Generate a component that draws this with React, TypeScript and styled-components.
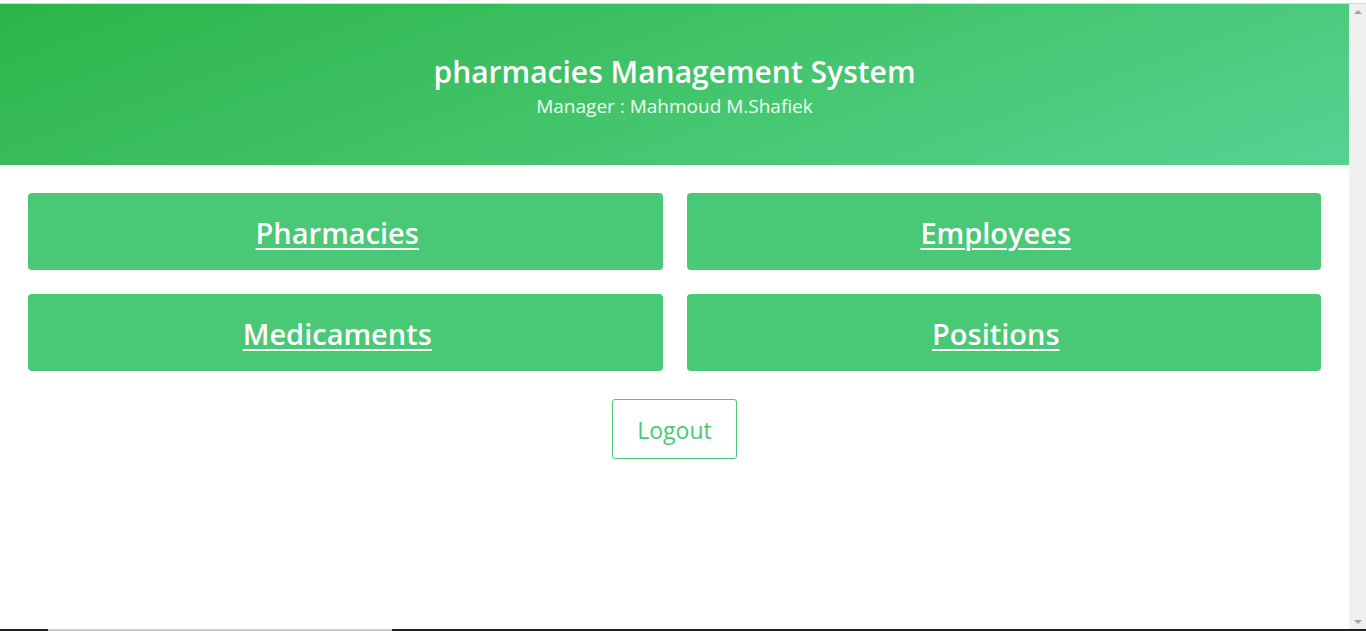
import styled, { createGlobalStyle } from "styled-components";

const GlobalStyle = createGlobalStyle`
  body {
    margin: 0;
    padding-top: 3px;
    background: #fff;
    font-family: "Open Sans", "Noto Sans", sans-serif;
    overflow: hidden;
  }
  * {
    box-sizing: border-box;
  }
`;

const Frame = styled.div`
  height: 628px;
  display: flex;
  flex-direction: column;
  border-top: 1px solid #d6d6d6;
`;

const Viewport = styled.div`
  flex: 1;
  display: flex;
  min-height: 0;
`;

const Page = styled.div`
  flex: 1;
  min-width: 0;
`;

const ScrollTrack = styled.div`
  width: 17px;
  background: #f0f0f0;
  display: flex;
  flex-direction: column;
  justify-content: space-between;
  align-items: center;
  padding: 6px 0 5px;
`;

const Arrow = styled.span<{ $down?: boolean }>`
  width: 0;
  height: 0;
  border-left: 4px solid transparent;
  border-right: 4px solid transparent;
  ${(p) =>
    p.$down
      ? "border-top: 4px solid #a3a3a3;"
      : "border-bottom: 4px solid #a3a3a3;"}
`;

const BottomStrip = styled.div`
  height: 2px;
  background: #202020;
  display: flex;
`;

const BottomThumb = styled.div`
  margin-left: 48px;
  width: 344px;
  background: #c8c8c8;
`;

const Header = styled.header`
  height: 161px;
  background: linear-gradient(160deg, #2db449 0%, #42c46a 50%, #56d293 100%);
  color: #fff;
  display: flex;
  flex-direction: column;
  align-items: center;
  justify-content: center;
`;

const Title = styled.h1`
  margin: 0;
  font-size: 30px;
  font-weight: 600;
  line-height: 42px;
`;

const Subtitle = styled.p`
  margin: 0;
  font-size: 19px;
  line-height: 26px;
  color: #effff4;
`;

const Main = styled.main`
  padding: 28px;
  display: flex;
  flex-direction: column;
  align-items: center;
  gap: 28px;
`;

const Grid = styled.div`
  width: 100%;
  display: grid;
  grid-template-columns: 1fr 1fr;
  gap: 24px;
`;

const Tile = styled.a`
  height: 77px;
  border-radius: 4px;
  background: #49c876;
  color: #fff;
  display: flex;
  align-items: center;
  justify-content: center;
  font-size: 29px;
  font-weight: 600;
  text-decoration: underline;
  text-decoration-thickness: 2px;
  text-underline-offset: 4px;
  padding: 2px 16px 0 0;
`;

const LogoutButton = styled.button`
  width: 125px;
  height: 60px;
  border: 1px solid #49c876;
  border-radius: 3px;
  background: #fff;
  color: #49c876;
  font-family: inherit;
  font-size: 23px;
  padding-top: 3px;
  cursor: pointer;
`;

const links = ["Pharmacies", "Employees", "Medicaments", "Positions"];

function App() {
  return (
    <>
      <GlobalStyle />
      <Frame>
        <Viewport>
          <Page>
            <Header>
              <Title>pharmacies Management System</Title>
              <Subtitle>Manager : Mahmoud M.Shafiek</Subtitle>
            </Header>
            <Main>
              <Grid>
                {links.map((l) => (
                  <Tile key={l} href="#">
                    {l}
                  </Tile>
                ))}
              </Grid>
              <LogoutButton>Logout</LogoutButton>
            </Main>
          </Page>
          <ScrollTrack>
            <Arrow />
            <Arrow $down />
          </ScrollTrack>
        </Viewport>
        <BottomStrip>
          <BottomThumb />
        </BottomStrip>
      </Frame>
    </>
  );
}

export default App;
